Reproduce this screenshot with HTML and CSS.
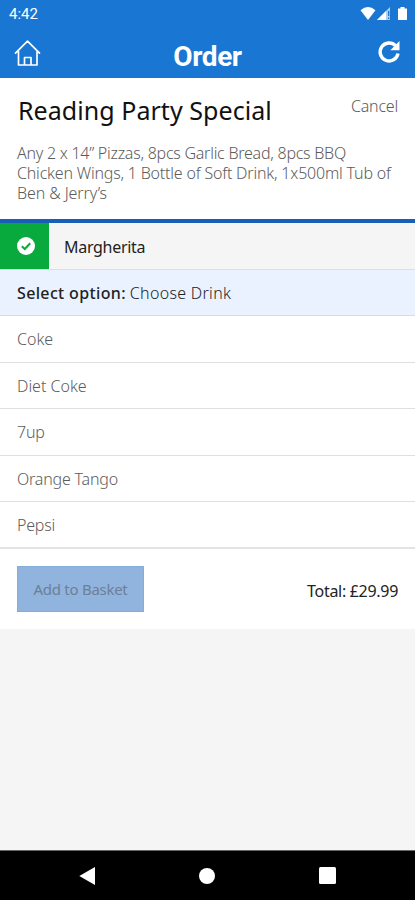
FILE: index.html
```html
<!DOCTYPE html>
<html lang="en">
<head>
<meta charset="utf-8">
<meta name="viewport" content="width=device-width, initial-scale=1">
<title>Order</title>
<link rel="stylesheet" href="styles.css">
</head>
<body>
<div class="screen">
  <header class="top">
    <div class="status">
      <span class="time">4:42</span>
      <svg class="signals" width="48" height="16" viewBox="0 0 48 16" fill="#fff">
        <path d="M0.5 4.2Q8 -2 15.500 4.200L8 14Z"/>
        <path d="M30 1V14H17Z" fill-opacity=".65"/>
        <path d="M26 5V14H17Z"/><path d="M28 5h1.300v5H28zM28 11.500h1.300V13H28z" fill="#1976d2"/>
        <path d="M38 2.500h2.500V1h4v1.500H47V14H38Z"/>
      </svg>
    </div>
    <div class="bar">
      <svg width="28" height="28" viewBox="0 0 28 28" fill="none" stroke="#fff" stroke-width="1.700" stroke-linejoin="round" stroke-linecap="round">
        <path d="M2.500 14.200L14.500 2.200L26.500 14.200M5.500 12.500V26H11.500V18.500H18V26H24V12.500M11.500 26H18"/>
      </svg>
      <h1 class="bar-title">Order</h1>
      <svg class="refresh" width="24" height="24" viewBox="0 0 24 24">
        <path d="M18.700 5.800A9 9 0 1 0 21 13.500" fill="none" stroke="#fff" stroke-width="3.400"/>
        <path d="M22.500 1V10.200H13.300Z" fill="#fff"/>
      </svg>
    </div>
  </header>
  <section class="deal">
    <div class="deal-head">
      <h2 class="deal-title">Reading Party Special</h2>
      <span class="cancel">Cancel</span>
    </div>
    <p class="desc"><span class="line line-a">Any 2 x 14” Pizzas, 8pcs Garlic Bread, 8pcs BBQ</span><span class="line line-b">Chicken Wings, 1 Bottle of Soft Drink, 1x500ml Tub of</span><span class="line line-c">Ben &amp; Jerry’s</span></p>
  </section>
  <div class="chosen">
    <div class="tick">
      <svg width="18" height="18" viewBox="0 0 18 18"><circle cx="9" cy="9" r="9" fill="#fff"/><path d="M4.800 9.300L7.800 12L13.200 6.300" fill="none" stroke="#08aa3e" stroke-width="2"/></svg>
    </div>
    <span class="chosen-name">Margherita</span>
  </div>
  <div class="prompt"><b class="prompt-label">Select option:</b><span class="prompt-value">Choose Drink</span></div>
  <ul class="options">
    <li class="option">Coke</li>
    <li class="option">Diet Coke</li>
    <li class="option">7up</li>
    <li class="option">Orange Tango</li>
    <li class="option">Pepsi</li>
  </ul>
  <footer class="checkout">
    <button class="add" disabled>Add to Basket</button>
    <span class="total">Total: <span class="price">£29.99</span></span>
  </footer>
  <nav class="nav">
    <svg width="16" height="18" viewBox="0 0 16 18"><path d="M.3 9L16 0V18Z" fill="#fff"/></svg>
    <svg width="16" height="16" viewBox="0 0 16 16"><circle cx="8" cy="8" r="8" fill="#fff"/></svg>
    <svg width="17" height="17" viewBox="0 0 17 17"><rect width="17" height="17" rx="1.500" fill="#fff"/></svg>
  </nav>
</div>
</body>
</html>
```
FILE: styles.css
```css
* { box-sizing: border-box; }
body { margin: 0; font-family: "Noto Sans", "Open Sans", sans-serif; font-size: 16px; font-weight: 300; color: #5c5c5c; }
h1, h2, p, ul { margin: 0; padding: 0; }
svg { display: block; flex: none; }
.screen { width: 415px; height: 900px; display: flex; flex-direction: column; background: #f5f5f5; overflow: hidden; }
.top { height: 78px; background: #1976d2; color: #fff; flex: none; }
.status { height: 28px; display: flex; justify-content: space-between; padding: 6px 7px 0 9px; }
.time { font: 400 15px/16px Roboto, sans-serif; }
.bar { height: 50px; display: flex; justify-content: space-between; padding: 11px 14px 0 13px; }
.bar-title { font: 700 28px/36px Roboto, sans-serif; letter-spacing: -.4px; margin-right: 3px; }
.refresh { margin-top: 1px; }
.deal { height: 141px; background: #fff; padding: 14px 17px 0; flex: none; }
.deal-head { display: flex; justify-content: space-between; height: 51px; }
.deal-title { font-weight: 400; font-size: 25px; line-height: 36px; letter-spacing: .05px; margin-left: 1px; color: #111; white-space: nowrap; }
.cancel { line-height: 28px; letter-spacing: -.2px; }
.line { display: block; line-height: 20px; white-space: nowrap; }
.line-a { letter-spacing: -.25px; }
.line-b { letter-spacing: -.2px; }
.line-c { letter-spacing: -.1px; }
.chosen { height: 51px; border-top: 4px solid #175fb8; border-bottom: 1px solid #dcdfe5; background: #f5f5f5; display: flex; align-items: center; color: #222; flex: none; }
.tick { width: 49px; height: 46px; background: #08aa3e; display: grid; place-items: center; padding-left: 3px; }
.chosen-name { margin-left: 15px; font-weight: 400; letter-spacing: -.3px; line-height: 22px; padding-top: 1px; }
.prompt { height: 46px; background: #eaf2ff; border-bottom: 1px solid #d7dce3; padding: 0 17px; line-height: 46px; display: flex; gap: 4px; color: #222; flex: none; }
.prompt-label { font-weight: 500; letter-spacing: .35px; }
.prompt-value { letter-spacing: .3px; }
.options { list-style: none; background: #fff; flex: none; }
.option { height: 46.6px; padding: 0 17px; line-height: 47px; letter-spacing: -.2px; border-bottom: 1px solid #dfdfdf; }
.option:first-child, .option:nth-child(2) { letter-spacing: 0; }
.option:last-child { height: 47px; border-bottom: 2px solid #e3e3e3; }
.checkout { height: 80px; background: #fff; display: flex; justify-content: space-between; padding: 17px 17px 0; flex: none; color: #222; }
.add { width: 127px; height: 46px; border: 1px solid #85add9; background: #90b4de; color: #6d7f96; font: inherit; font-weight: 400; font-size: 15px; letter-spacing: -.27px; padding: 0; white-space: nowrap; }
.total { line-height: 50px; font-weight: 400; letter-spacing: -.3px; }
.nav { height: 50px; margin-top: auto; background: #000; border-top: 1px solid #666; display: flex; justify-content: space-between; align-items: center; padding: 0 79px 0 79px; flex: none; }
```
